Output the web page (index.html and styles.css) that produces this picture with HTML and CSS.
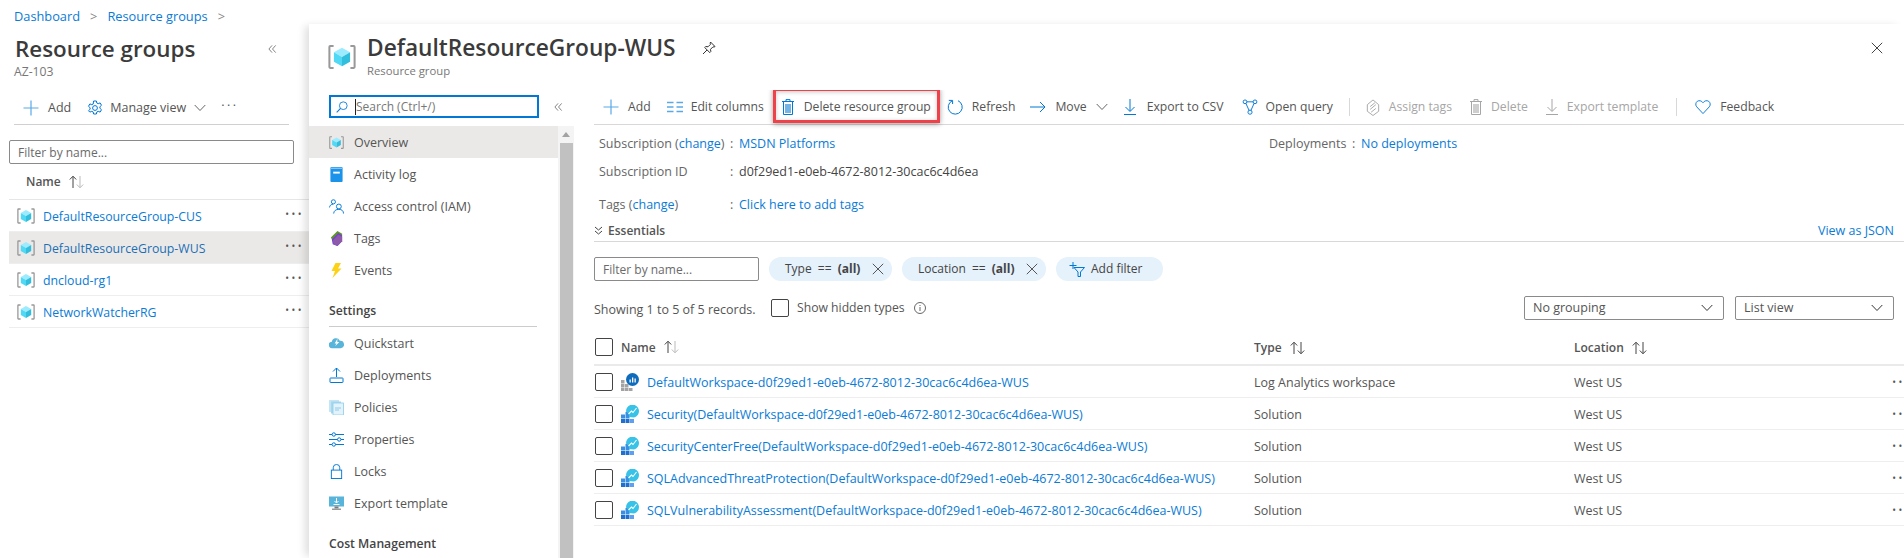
FILE: index.html
```html
<!DOCTYPE html>
<html lang="en">
<head>
<meta charset="utf-8">
<title>DefaultResourceGroup-WUS</title>
<link rel="stylesheet" href="styles.css">
</head>
<body>
<svg class="defs" width="0" height="0" aria-hidden="true">
  <defs>
    <symbol id="rg" viewBox="0 0 18 18">
      <path d="M3.6 2H1.4a.5.5 0 0 0-.5.5v13a.5.5 0 0 0 .5.5h2.2M14.4 2h2.2a.5.5 0 0 1 .5.5v13a.5.5 0 0 1-.5.5h-2.2" fill="none" stroke="#999" stroke-width="1.3"/>
      <path d="M9 3l5.200 3L9 9 3.800 6z" fill="#9cebff"/><path d="M3.800 6L9 9v6l-5.200-3z" fill="#50d8f5"/><path d="M14.200 6L9 9v6l5.200-3z" fill="#32bedd"/>
    </symbol>
    <symbol id="plus" viewBox="0 0 16 16"><path d="M8 .5v15M.5 8h15" stroke="#59a9e8" stroke-width="1.2" fill="none"/></symbol>
    <symbol id="gear" viewBox="0 0 16 16"><g fill="none" stroke="#0078d4" stroke-width="1"><circle cx="8" cy="8" r="2.4"/><path d="M6.600 1h2.800l.4 2 1.400.7 1.900-.8 1.400 2.400-1.600 1.400v1.600l1.600 1.400-1.400 2.400-1.900-.8-1.400.7-.4 2H6.600l-.4-2-1.400-.7-1.900.8L1.500 10.700l1.600-1.400V7.700L1.500 6.300l1.400-2.400 1.900.8 1.400-.7z"/></g></symbol>
    <symbol id="down" viewBox="0 0 12 8"><path d="M.7 1l5.300 5.500L11.300 1" fill="none" stroke="currentColor" stroke-width="1"/></symbol>
    <symbol id="collapse" viewBox="0 0 10 10"><path d="M4.500 1L1 5l3.500 4M8.500 1L5 5l3.500 4" fill="none" stroke="#777" stroke-width="1"/></symbol>
    <symbol id="sort" viewBox="0 0 17 14"><path d="M5 13V1.500M1.800 4.500L5 1.200l3.200 3.300" fill="none" stroke="#444" stroke-width="1"/><path d="M12 1v11.500M8.800 9.500l3.200 3.300 3.200-3.300" fill="none" stroke="currentColor" stroke-width="1"/></symbol>
    <symbol id="columns" viewBox="0 0 16 12"><path d="M0 1.500h6.500M9.500 1.500H16M0 6h6.500M9.500 6H16M0 10.500h6.500M9.500 10.500H16" stroke="#59a9e8" stroke-width="1.500" fill="none"/></symbol>
    <symbol id="trash" viewBox="0 0 12 16"><path d="M0 2.500h12M4 2.500V.6h4v1.900" fill="none" stroke="currentColor" stroke-width="1"/><path d="M1.500 2.500h9v13h-9z" fill="none" stroke="currentColor" stroke-width="1"/><path d="M3 5h6v9H3z" fill="currentColor" opacity=".55"/></symbol>
    <symbol id="refresh" viewBox="0 0 16 16"><path d="M5.200 1.800A7 7 0 1 0 11 1.700" fill="none" stroke="#0078d4" stroke-width="1"/><path d="M5.600 5V1.400H1.800" fill="none" stroke="#0078d4" stroke-width="1"/></symbol>
    <symbol id="arrow" viewBox="0 0 16 12"><path d="M0 6h15M10 1l5 5-5 5" fill="none" stroke="#0078d4" stroke-width="1"/></symbol>
    <symbol id="export" viewBox="0 0 12 16"><path d="M6 0v12M1.500 8L6 12.500 10.500 8M0 15.500h12" fill="none" stroke="currentColor" stroke-width="1"/></symbol>
    <symbol id="query" viewBox="0 0 16 17"><g fill="none" stroke="#0078d4" stroke-width="1"><circle cx="2.700" cy="3" r="2"/><circle cx="13.300" cy="3" r="2"/><circle cx="8" cy="14" r="2.200"/><path d="M4.700 3h6.600M3.700 4.800l3.300 7.300M12.300 4.800L9 12.100"/></g></symbol>
    <symbol id="tag" viewBox="0 0 14 18"><path d="M7 1l6 5v7l-6 4.500L1 13V6z M4 8l5-4M4 11l6-5M5 14l5-4" fill="none" stroke="#a6a6a6" stroke-width="1"/></symbol>
    <symbol id="heart" viewBox="0 0 17 16"><path d="M8.500 15L1.800 7.800C.3 6 .6 3.200 2.500 1.900c1.900-1.200 4.500-.6 6 1.600 1.500-2.200 4.100-2.800 6-1.600 1.900 1.300 2.200 4.100.7 5.900z" fill="none" stroke="#0078d4" stroke-width="1"/></symbol>
    <symbol id="pin" viewBox="0 0 14 14"><path d="M8.500 1l4.500 4.500-1 .6-1-.3-2.500 2.500.3 2.300-1 1L2.700 6.500l1-1 2.300.3 2.500-2.500-.3-1zM5 9l-4 4" fill="none" stroke="#333" stroke-width="1"/></symbol>
    <symbol id="close" viewBox="0 0 12 12"><path d="M.8.8l10.400 10.400M11.200.8L.8 11.200" fill="none" stroke="currentColor" stroke-width="1"/></symbol>
    <symbol id="search" viewBox="0 0 14 14"><circle cx="8.500" cy="5.500" r="4.500" fill="none" stroke="#0078d4" stroke-width="1"/><path d="M5.300 8.700L.8 13.200" stroke="#0078d4" stroke-width="1.200"/></symbol>
    <symbol id="activity" viewBox="0 0 14 16"><rect x=".5" y="0" width="13" height="16" rx="1" fill="#1b93eb"/><path d="M1 .8h12v1H1z" fill="#b3d9f7"/><rect x="3.500" y="5" width="7" height="2" fill="#fff"/></symbol>
    <symbol id="iam" viewBox="0 0 16 16"><g fill="none" stroke="#0078d4" stroke-width="1"><circle cx="4.700" cy="3" r="2.200"/><circle cx="10.500" cy="8" r="2.600"/><path d="M.6 9c0-2 1.700-3.500 3.900-3.500M5 15.500c0-2.800 2.400-4.500 5.500-4.500s5 1.700 5 4.500"/></g></symbol>
    <symbol id="tags" viewBox="0 0 14 16"><path d="M1 7l7-7 5 3v2L5 14z" fill="#5e9624"/><path d="M2 9l7-7 4 3v6l-5 5-5-2z" fill="#773adc"/><path d="M3 10l6-6 4 2v5l-5 5-4-2z" fill="#8c5aa8"/></symbol>
    <symbol id="bolt" viewBox="0 0 10 15"><path d="M4 0h5.500L6.500 5.500H10L1 15l2.500-7H0z" fill="#fcd116"/></symbol>
    <symbol id="cloud" viewBox="0 0 16 10"><path d="M3.500 10A3.500 3.500 0 0 1 3 3 4.500 4.500 0 0 1 11.500 2 4 4 0 0 1 12.500 10z" fill="#59b4d9"/><path d="M9 0L6 5h2L6.500 8 11 3.500H8.800z" fill="#fff"/></symbol>
    <symbol id="deploy" viewBox="0 0 14 15"><g fill="none" stroke="#0078d4" stroke-width="1"><path d="M7 0v9M3.500 3.500L7 0l3.500 3.500"/><rect x=".5" y="10" width="13" height="4.500" rx=".5"/></g></symbol>
    <symbol id="policy" viewBox="0 0 15 15"><rect x="0" y="0" width="10" height="12" fill="#c4e5f5"/><rect x="2" y="1.500" width="10" height="12" fill="#a8d8ef"/><rect x="4" y="3" width="10.500" height="12" fill="#e3f3fb" stroke="#8ecbe8" stroke-width=".8"/><path d="M6 8h6M6 10h4" stroke="#8ecbe8"/></symbol>
    <symbol id="props" viewBox="0 0 15 14"><g fill="none" stroke="#0078d4" stroke-width="1"><path d="M0 2h3M6.500 2H15M0 7h8.500M12 7h3M0 12h3M6.500 12H15"/><circle cx="4.800" cy="2" r="1.700"/><circle cx="10.200" cy="7" r="1.700"/><circle cx="4.800" cy="12" r="1.700"/></g></symbol>
    <symbol id="lock" viewBox="0 0 12 16"><g fill="none" stroke="#0078d4" stroke-width="1"><rect x=".5" y="6.500" width="11" height="9"/><path d="M2.500 6.500V4a3.500 3.500 0 0 1 7 0v2.500"/></g></symbol>
    <symbol id="exporttpl" viewBox="0 0 15 14"><rect y="0" width="15" height="10" fill="#59b4d9"/><rect x="5.500" y="10" width="4" height="2" fill="#7a7a7a"/><rect x="3" y="12" width="9" height="1.500" fill="#999"/><path d="M7.500 1.500v5M5.500 4.500l2 2 2-2M4.500 8h6" fill="none" stroke="#fff"/></symbol>
    <symbol id="funnel" viewBox="0 0 17 15"><path d="M5 0v7M1.500 3.500h7" stroke="#0078d4" fill="none"/><path d="M6 5.500h10.500l-4 4.500v4.500h-2.500V10z" fill="none" stroke="#0078d4"/></symbol>
    <symbol id="info" viewBox="0 0 12 12"><circle cx="6" cy="6" r="5.500" fill="none" stroke="#666"/><path d="M6 5v4M6 3v1" stroke="#666"/></symbol>
    <symbol id="log" viewBox="0 0 18 18"><g fill="#a3a3a3"><rect x="0" y="7" width="3.500" height="3.500"/><rect x="0" y="11" width="3.500" height="3.500"/><rect x="0" y="15" width="3.500" height="3"/><rect x="4" y="11" width="3.500" height="3.500"/><rect x="4" y="15" width="3.500" height="3"/><rect x="8" y="15" width="3.500" height="3"/></g><circle cx="11.500" cy="6.500" r="6.500" fill="#0f6cbd"/><path d="M8.500 6.500h1.300v3H8.500zM11 4.500h1.300v5H11zM13.500 5.500h1.300v4h-1.300z" fill="#fff"/></symbol>
    <symbol id="solution" viewBox="0 0 18 18"><g fill="#3a8fe0"><rect x="0" y="9.500" width="4" height="4"/><rect x="0" y="14" width="4" height="4" fill="#1f6fd0"/><rect x="4.500" y="7" width="4" height="6.500"/><rect x="4.500" y="14" width="4" height="4" fill="#1f6fd0"/><rect x="9" y="14" width="4" height="4" fill="#5ea0ef"/></g><path d="M5 6.500A6.500 6.500 0 1 1 13 12.500L8 12V9z" fill="#37c2e8"/><path d="M7.500 9l3-3 1.500 1.500L15.500 3" fill="none" stroke="#fff" stroke-width="1.100"/></symbol>
  </defs>
</svg>
<div class="app">
  <aside class="left">
    <nav class="crumbs"><a>Dashboard</a><span class="sep">&gt;</span><a>Resource groups</a><span class="sep">&gt;</span></nav>
    <div class="left-head">
      <h1 class="title">Resource groups</h1>
      <svg class="ico collapse-left"><use href="#collapse"/></svg>
    </div>
    <div class="sub">AZ-103</div>
    <div class="left-bar">
      <svg class="ico i16"><use href="#plus"/></svg><span class="add-label">Add</span>
      <svg class="ico i16 gear"><use href="#gear"/></svg><span class="mv-label">Manage view</span>
      <svg class="ico chev"><use href="#down"/></svg><span class="bar-more">···</span>
    </div>
    <div class="left-filter"><input class="filter" placeholder="Filter by name..."></div>
    <div class="left-name">Name<svg class="ico sort light"><use href="#sort"/></svg></div>
    <ul class="rg-list">
      <li class="rg"><svg class="ico i18"><use href="#rg"/></svg><a>DefaultResourceGroup-CUS</a><span class="dots">•••</span></li>
      <li class="rg on"><svg class="ico i18"><use href="#rg"/></svg><a>DefaultResourceGroup-WUS</a><span class="dots">•••</span></li>
      <li class="rg"><svg class="ico i18"><use href="#rg"/></svg><a>dncloud-rg1</a><span class="dots">•••</span></li>
      <li class="rg"><svg class="ico i18"><use href="#rg"/></svg><a>NetworkWatcherRG</a><span class="dots">•••</span></li>
    </ul>
  </aside>
  <section class="blade">
    <header class="blade-head">
      <svg class="ico blade-icon"><use href="#rg"/></svg>
      <div class="blade-titles">
        <div class="blade-title-row"><h2 class="title">DefaultResourceGroup-WUS</h2><svg class="ico pin"><use href="#pin"/></svg></div>
        <div class="sub">Resource group</div>
      </div>
      <svg class="ico close"><use href="#close"/></svg>
    </header>
    <div class="blade-body">
      <nav class="side">
        <div class="side-search">
          <div class="search"><svg class="ico i12"><use href="#search"/></svg><span class="caret"></span><span class="search-ph">Search (Ctrl+/)</span></div>
          <svg class="ico collapse-side"><use href="#collapse"/></svg>
        </div>
        <div class="side-scroll">
          <ul class="side-list">
            <li class="item on"><svg class="ico i15"><use href="#rg"/></svg>Overview</li>
            <li class="item"><svg class="ico i15"><use href="#activity"/></svg>Activity log</li>
            <li class="item"><svg class="ico i15"><use href="#iam"/></svg>Access control (IAM)</li>
            <li class="item"><svg class="ico i15"><use href="#tags"/></svg>Tags</li>
            <li class="item"><svg class="ico i15"><use href="#bolt"/></svg>Events</li>
            <li class="group">Settings</li>
            <li class="item"><svg class="ico i15"><use href="#cloud"/></svg>Quickstart</li>
            <li class="item"><svg class="ico i15"><use href="#deploy"/></svg>Deployments</li>
            <li class="item"><svg class="ico i15"><use href="#policy"/></svg>Policies</li>
            <li class="item"><svg class="ico i15"><use href="#props"/></svg>Properties</li>
            <li class="item"><svg class="ico i15"><use href="#lock"/></svg>Locks</li>
            <li class="item"><svg class="ico i15"><use href="#exporttpl"/></svg>Export template</li>
            <li class="group cost">Cost Management</li>
          </ul>
          <div class="scrollbar"><span class="sb-up"></span><span class="sb-thumb"></span></div>
        </div>
      </nav>
      <main class="main">
        <div class="toolbar">
          <span class="tb t-add"><svg class="ico i16"><use href="#plus"/></svg>Add</span>
          <span class="tb t-cols"><svg class="ico i16"><use href="#columns"/></svg>Edit columns</span>
          <span class="tb t-del"><svg class="ico trash"><use href="#trash"/></svg>Delete resource group</span>
          <span class="tb t-ref"><svg class="ico i16"><use href="#refresh"/></svg>Refresh</span>
          <span class="tb t-move"><svg class="ico i16"><use href="#arrow"/></svg>Move<svg class="ico chev"><use href="#down"/></svg></span>
          <span class="tb t-csv"><svg class="ico exp"><use href="#export"/></svg>Export to CSV</span>
          <span class="tb t-query"><svg class="ico i16"><use href="#query"/></svg>Open query</span>
          <span class="divider"></span>
          <span class="tb off t-tags"><svg class="ico tagi"><use href="#tag"/></svg>Assign tags</span>
          <span class="tb off t-delete"><svg class="ico trash"><use href="#trash"/></svg>Delete</span>
          <span class="tb off t-tpl"><svg class="ico exp"><use href="#export"/></svg>Export template</span>
          <span class="divider d-last"></span>
          <span class="tb t-fb"><svg class="ico i16"><use href="#heart"/></svg>Feedback</span>
        </div>
        <div class="details">
          <div class="d-row d-1">
            <span class="d-label">Subscription <span class="muted">(<a>change</a>)</span></span><span class="d-colon">:</span><a class="d-msdn">MSDN Platforms</a>
            <span class="d-right">Deployments</span><span class="d-colon">:</span><a>No deployments</a>
          </div>
          <div class="d-row d-2"><span class="d-label">Subscription ID</span><span class="d-colon">:</span><span class="d-val">d0f29ed1-e0eb-4672-8012-30cac6c4d6ea</span></div>
          <div class="d-row d-3"><span class="d-label">Tags <span class="muted">(<a>change</a>)</span></span><span class="d-colon">:</span><a>Click here to add tags</a></div>
        </div>
        <div class="essentials">
          <span class="ess-toggle"><svg class="ico ess-ico" viewBox="0 0 9 9"><path d="M1 1l3.500 3L8 1M1 5l3.500 3L8 5" fill="none" stroke="#444"/></svg>Essentials</span>
          <a>View as JSON</a>
        </div>
        <div class="filters">
          <input class="filter f-name" placeholder="Filter by name...">
          <span class="pill p-type"><span class="pill-text">Type == <b>(all)</b></span><svg class="ico x"><use href="#close"/></svg></span>
          <span class="pill p-loc"><span class="pill-text">Location == <b>(all)</b></span><svg class="ico x"><use href="#close"/></svg></span>
          <span class="pill p-add"><svg class="ico funnel"><use href="#funnel"/></svg><span>Add filter</span></span>
        </div>
        <div class="records">
          <span class="rec-text">Showing 1 to 5 of 5 records.</span>
          <span class="cb"></span>
          <span class="hidden-label">Show hidden types</span>
          <svg class="ico i12 info"><use href="#info"/></svg>
          <span class="selects">
            <span class="sel s-group">No grouping<svg class="ico seli"><use href="#down"/></svg></span>
            <span class="sel s-view">List view<svg class="ico seli"><use href="#down"/></svg></span>
          </span>
        </div>
        <div class="t-row t-head">
          <span class="c-name"><span class="cb"></span><span class="th-name">Name</span><svg class="ico sort light"><use href="#sort"/></svg></span>
          <span class="c-type">Type<svg class="ico sort"><use href="#sort"/></svg></span>
          <span class="c-loc">Location<svg class="ico sort"><use href="#sort"/></svg></span>
        </div>
        <div class="t-row">
          <span class="c-name"><span class="cb"></span><svg class="ico i18 ri"><use href="#log"/></svg><a>DefaultWorkspace-d0f29ed1-e0eb-4672-8012-30cac6c4d6ea-WUS</a></span>
          <span class="c-type">Log Analytics workspace</span><span class="c-loc">West US</span><span class="dots">•••</span>
        </div>
        <div class="t-row">
          <span class="c-name"><span class="cb"></span><svg class="ico i18 ri"><use href="#solution"/></svg><a>Security(DefaultWorkspace-d0f29ed1-e0eb-4672-8012-30cac6c4d6ea-WUS)</a></span>
          <span class="c-type">Solution</span><span class="c-loc">West US</span><span class="dots">•••</span>
        </div>
        <div class="t-row">
          <span class="c-name"><span class="cb"></span><svg class="ico i18 ri"><use href="#solution"/></svg><a>SecurityCenterFree(DefaultWorkspace-d0f29ed1-e0eb-4672-8012-30cac6c4d6ea-WUS)</a></span>
          <span class="c-type">Solution</span><span class="c-loc">West US</span><span class="dots">•••</span>
        </div>
        <div class="t-row">
          <span class="c-name"><span class="cb"></span><svg class="ico i18 ri"><use href="#solution"/></svg><a>SQLAdvancedThreatProtection(DefaultWorkspace-d0f29ed1-e0eb-4672-8012-30cac6c4d6ea-WUS)</a></span>
          <span class="c-type">Solution</span><span class="c-loc">West US</span><span class="dots">•••</span>
        </div>
        <div class="t-row">
          <span class="c-name"><span class="cb"></span><svg class="ico i18 ri"><use href="#solution"/></svg><a>SQLVulnerabilityAssessment(DefaultWorkspace-d0f29ed1-e0eb-4672-8012-30cac6c4d6ea-WUS)</a></span>
          <span class="c-type">Solution</span><span class="c-loc">West US</span><span class="dots">•••</span>
        </div>
      </main>
    </div>
  </section>
</div>
</body>
</html>
```
FILE: styles.css
```css
* { box-sizing: border-box; }
html, body { margin: 0; height: 558px; overflow: hidden; background: #fff; }
body { font: 12.5px/16px "Open Sans", sans-serif; color: #404040; }
ul { list-style: none; margin: 0; padding: 0; }
h1, h2 { margin: 0; }
a { color: #0a7bd6; }
.defs { position: absolute; }
.ico { display: block; flex: none; overflow: visible; }
.i12 { width: 12px; height: 12px; }
.i15 { width: 15px; height: 15px; margin-right: 10px; }
.i16 { width: 16px; height: 16px; }
.i18 { width: 18px; height: 18px; }
.app { display: flex; height: 558px; }

/* left blade */
.left { width: 309px; flex: none; }
.crumbs { display: flex; align-items: center; height: 16px; margin: 8px 0 0 14px; font-size: 12.8px; }
.sep { margin: 0 10px; color: #888; }
.left-head { display: flex; align-items: center; justify-content: space-between; margin: 11px 32px 0 15px; height: 28px; }
.title { font-size: 22.7px; line-height: 28px; font-weight: 600; color: #3b3b3b; white-space: nowrap; }
.left-head .title { font-size: 22.4px; }
.sub { color: #777; font-size: 11.3px; line-height: 14px; }
.left > .sub { margin: 2px 0 0 14px; font-size: 12.2px; }
.collapse-left { width: 9px; height: 10px; }
.left-bar { display: flex; align-items: center; height: 36px; margin: 10px 20px 0 14px; padding: 2px 0 0 9px; border-bottom: 1px solid #d0d0d0; color: #555; }
.add-label { margin-left: 9px; }
.gear { margin-left: 16px; }
.mv-label { margin-left: 7px; }
.chev { width: 12px; height: 8px; margin-left: 8px; color: #666; }
.bar-more { margin-left: 15px; letter-spacing: 2.5px; line-height: 10px; margin-top: -3px; }
.left-filter { padding: 15px 15px 0 9px; }
.filter { display: block; font: 12px "Open Sans", sans-serif; width: 100%; height: 24px; padding: 0 8px; border: 1px solid #8a8a8a; border-radius: 2px; background: #fff; color: #444; outline: 0; }
.filter::placeholder { color: #6a6a6a; opacity: 1; }
.left-name { display: flex; align-items: center; height: 36px; padding-left: 17px; font-size: 12px; font-weight: 600; color: #555; border-bottom: 1px solid #e6e6e6; margin-left: 9px; }
.sort { width: 17px; height: 14px; margin-left: 7px; color: #444; }
.sort.light { color: #bbb; }
.rg { display: flex; align-items: center; height: 32px; margin-left: 9px; padding-left: 8px; border-bottom: 1px solid #eee; }
.rg .i18 { margin-right: 8px; }
.rg a { margin-top: 3px; font-size: 12.3px; }
.rg.on { background: #ebe9e8; }
.rg.on a { color: #1b6fb5; }
.dots { margin-left: auto; margin-right: 5px; font-size: 10px; letter-spacing: 2.5px; color: #555; line-height: 10px; margin-top: -3px; }

/* right blade */
.blade { flex: 1; min-width: 0; margin-top: 24px; display: flex; flex-direction: column; background: #fff; box-shadow: -6px 0 8px -2px rgba(0,0,0,.13); }
.blade-head { display: flex; height: 66px; padding: 19px 19px 0 19px; }
.blade-icon { width: 28px; height: 28px; margin-right: 11px; }
.blade-titles { flex: 1; margin-top: -9px; }
.blade-title-row { display: flex; align-items: center; height: 28px; }
.blade-titles .sub { margin-top: 2px; }
.pin { width: 14px; height: 14px; margin-left: 26px; }
.close { width: 12px; height: 12px; margin-top: -1px; margin-right: 2px; color: #444; }
.blade-body { flex: 1; display: flex; min-height: 0; }

/* side nav */
.side { width: 265px; flex: none; display: flex; flex-direction: column; min-height: 0; }
.side-search { display: flex; align-items: center; height: 36px; padding: 5px 0 8px 20px; }
.search { display: flex; align-items: center; width: 210px; height: 23px; padding-left: 5px; border: 2px solid #0078d4; color: #777; }
.caret { width: 1px; height: 16px; margin-left: 7px; background: #222; }
.search-ph { margin-left: 0; font-size: 12px; }
.collapse-side { width: 9px; height: 10px; margin-left: 15px; }
.side-scroll { flex: 1; display: flex; min-height: 0; overflow: hidden; }
.side-list { flex: 1; min-width: 0; }
.item { display: flex; align-items: center; height: 32px; padding: 2px 0 0 20px; color: #555; }
.item .ico { margin-top: -2px; }
.item.on { background: #ebe9e8; }
.group { margin-left: 20px; width: 208px; height: 41px; padding-top: 17px; font-weight: 600; font-size: 12.2px; color: #444; border-bottom: 1px solid #ccc; }
.group.cost { border: 0; }
.scrollbar { width: 16px; flex: none; background: #f4f4f4; display: flex; flex-direction: column; align-items: center; }
.sb-up { margin-top: 6px; border: 4px solid transparent; border-top: 0; border-bottom: 5px solid #a3a3a3; }
.sb-thumb { flex: 1; width: 13px; margin-top: 6px; background: #c1c1c1; }

/* main */
.main { flex: 1; min-width: 0; overflow: hidden; padding-left: 20px; }
.toolbar { display: flex; align-items: center; height: 35px; border-bottom: 1px solid #d8d8d8; color: #555; padding-left: 9px; font-size: 12.2px; }
.tb { display: flex; align-items: center; gap: 9px; white-space: nowrap; }
.t-cols { margin-left: 16px; gap: 8px; }
.t-del { position: relative; margin-left: 18px; gap: 10px; }
.t-del::after { content: ""; position: absolute; left: -9px; right: -9px; top: -11px; bottom: -8px; border: 3px solid #f0404a; box-shadow: 0 1px 5px rgba(0,0,0,.4), inset 0 1px 4px rgba(0,0,0,.22); }
.t-ref { margin-left: 16px; }
.t-move { margin-left: 15px; }
.t-csv { margin-left: 16px; gap: 11px; }
.t-query { margin-left: 18px; gap: 8px; }
.divider { width: 1px; height: 18px; margin: 0 16px; background: #d8d8d8; }
.d-last { margin: 0 18px; }
.off { color: #a6a6a6; }
.t-delete, .t-tpl { margin-left: 18px; }
.trash { width: 12px; height: 16px; color: #0078d4; }
.off .trash, .off .exp { color: #a6a6a6; }
.exp { width: 12px; height: 16px; color: #0078d4; }
.tagi { width: 14px; height: 17px; }
.t-move .chev { margin-left: 0; }
.details { color: #666; }
.d-row { display: flex; align-items: center; height: 16px; padding-left: 5px; }
.d-1 { margin-top: 11px; }
.d-2 { margin-top: 12px; }
.d-3 { margin-top: 17px; }
.d-val { color: #444; }
.d-label { width: 131px; }
.d-right { width: 83px; }
.d-colon { width: 9px; }
.d-msdn { width: 530px; }
.essentials { display: flex; justify-content: space-between; align-items: center; height: 24px; margin-top: 5px; padding: 2px 10px 0 0; border-bottom: 1px solid #d8d8d8; }
.ess-toggle { display: flex; align-items: center; gap: 5px; font-weight: 600; font-size: 12px; color: #555; }
.ess-ico { width: 9px; height: 9px; }
.filters { display: flex; gap: 10px; align-items: center; margin-top: 15px; height: 24px; }
.f-name { width: 165px; }
.pill { display: flex; align-items: center; height: 24px; padding-left: 16px; border-radius: 12px; background: #e5f1fb; color: #444; font-size: 12px; }
.pill-text { word-spacing: 3px; }
.p-type { width: 123px; }
.p-loc { width: 144px; }
.p-add { width: 107px; padding-left: 12px; gap: 6px; }
.x { width: 12px; height: 12px; margin-left: 12px; color: #555; }
.funnel { width: 17px; height: 15px; }
.records { display: flex; align-items: center; height: 40px; margin-top: 8px; }
.rec-text { width: 177px; color: #555; margin-top: 2px; }
.cb { display: block; width: 18px; height: 18px; border: 1px solid #444; border-radius: 2px; flex: none; background: #fff; }
.records .cb { margin-top: -2px; }
.hidden-label { margin: -3px 9px 0 8px; color: #555; font-size: 12.2px; }
.info { margin-top: -2px; }
.selects { display: flex; gap: 11px; margin: -2px 0 0 auto; padding-right: 10px; }
.sel { display: flex; align-items: center; justify-content: space-between; height: 24px; padding: 0 10px 0 8px; border: 1px solid #8a8a8a; border-radius: 2px; color: #555; }
.s-group { width: 200px; }
.s-view { width: 159px; }
.seli { width: 12px; height: 8px; color: #333; }
.t-row { display: flex; align-items: center; height: 32px; border-bottom: 1px solid #eee; width: 1340px; color: #555; }
.t-head { height: 37px; border-bottom: 2px solid #eaeaea; font-weight: 600; font-size: 12px; }
.c-name { display: flex; align-items: center; width: 660px; padding-left: 1px; white-space: nowrap; }
.c-name a, .th-name, .c-type, .c-loc { margin-top: 2px; }
.c-type { display: flex; align-items: center; width: 320px; }
.c-loc { display: flex; align-items: center; }
.th-name { margin-left: 8px; }
.ri { margin: 0 8px; }
.t-row > .dots { margin-left: auto; margin-right: 0; margin-top: 1px; padding-right: 23px; }
```
